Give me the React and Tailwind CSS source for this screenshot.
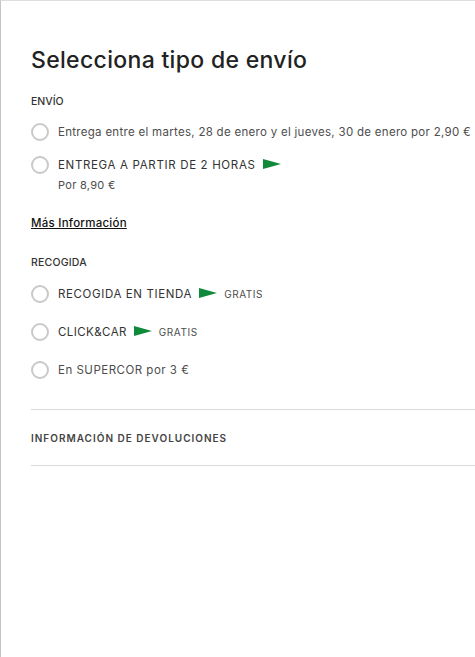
import React from 'react';

const FONT = 'font-["Inter","Noto_Sans",sans-serif]';

function Flag() {
  return (
    <svg width="18" height="10" viewBox="0 0 18 10" className="shrink-0 -mt-[3px]">
      <path d="M0 0 L18 5 L0 10 Z" fill="#0f8a3a" />
    </svg>
  );
}

function Radio() {
  return <span className="block w-[18px] h-[18px] mr-[2px] shrink-0 rounded-full border-2 border-[#c9c9c9] bg-white" />;
}

function Option({ children, className }) {
  return (
    <div className={`flex items-center gap-[7px] ${className}`}>
      <Radio />
      {children}
    </div>
  );
}

function Free() {
  return <span className="text-[10px] text-[#4d4d4d] tracking-[0.55px]">GRATIS</span>;
}

export default function App() {
  return (
    <div className={`${FONT} w-[475px] h-[657px] overflow-hidden bg-white border-t border-t-[#dedede] border-l border-l-[#c4c4c4] pl-[30px] pt-[44px] text-[#333]`}>
      <h1 className="text-[23px] leading-[30px] font-medium text-[#222] tracking-[0.32px]">Selecciona tipo de envío</h1>

      <h2 className="mt-[20px] text-[10.5px] leading-[14px] font-medium text-[#333]">ENVÍO</h2>
      <Option className="mt-[14px]">
        <span className="text-[11.5px] leading-[18px] whitespace-nowrap text-[#4d4d4d] tracking-[0.29px]">Entrega entre el martes, 28 de enero y el jueves, 30 de enero por 2,90 €</span>
      </Option>
      <Option className="mt-[15px]">
        <span className="text-[11.5px] leading-[18px] tracking-[0.66px]">ENTREGA A PARTIR DE 2 HORAS</span>
        <Flag />
      </Option>
      <p className="ml-[27px] mt-[2px] text-[11px] leading-[18px] text-[#4d4d4d] tracking-[0.3px]">Por 8,90 €</p>

      <a className="block mt-[20px] text-[11.5px] leading-[18px] font-medium text-[#111] underline tracking-[0.25px]">Más Información</a>

      <h2 className="mt-[24px] text-[10.5px] leading-[14px] font-medium text-[#333] tracking-[0.2px]">RECOGIDA</h2>
      <Option className="mt-[15px]">
        <span className="text-[11.5px] leading-[18px] tracking-[0.62px]">RECOGIDA EN TIENDA</span>
        <Flag />
        <Free />
      </Option>
      <Option className="mt-[20px]">
        <span className="text-[11.5px] leading-[18px] tracking-[0.42px]">CLICK&amp;CAR</span>
        <Flag />
        <Free />
      </Option>
      <Option className="mt-[20px]">
        <span className="text-[11.5px] leading-[18px] text-[#4d4d4d] tracking-[0.5px]">En SUPERCOR por 3 €</span>
      </Option>

      <div className="mt-[30px] border-t border-b border-[#d9d9d9] h-[57px] pt-[1px] flex items-center">
        <span className="text-[10px] font-semibold text-[#444] tracking-[1px]">INFORMACIÓN DE DEVOLUCIONES</span>
      </div>
    </div>
  );
}
